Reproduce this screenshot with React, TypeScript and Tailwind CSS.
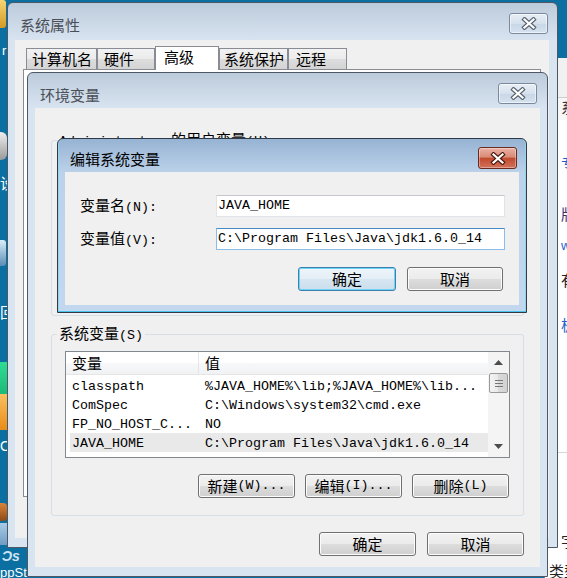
import React from "react";

const CJK = /[\u2E80-\u9FFF\uFF00-\uFFEF]/;

// split text into CJK / latin runs: CJK glyphs are wider than the mono latin ones
function T({ s }: { s: string }) {
  const runs: { cjk: boolean; text: string }[] = [];
  for (const ch of s) {
    const cjk = CJK.test(ch);
    const last = runs[runs.length - 1];
    if (last && last.cjk === cjk) last.text += ch;
    else runs.push({ cjk, text: ch });
  }
  return (
    <>
      {runs.map((r, i) =>
        r.cjk ? (
          <span key={i} className="font-['Noto_Sans_CJK_SC',sans-serif] text-[15px]">
            {r.text}
          </span>
        ) : (
          <span key={i} className="font-['Liberation_Mono',monospace] text-[13.33px]">
            {r.text}
          </span>
        )
      )}
    </>
  );
}

function CloseBtn({ active }: { active?: boolean }) {
  return (
    <div
      className={
        active
          ? "flex h-[22px] w-[39px] items-center justify-center rounded-[3px] border border-[#6a2a1e] bg-[linear-gradient(#eab3a5,#d98a74_45%,#c14a2f_52%,#d2735a)] shadow-[inset_0_0_0_1px_rgba(255,255,255,0.35)]"
          : "flex h-[21px] w-[39px] items-center justify-center rounded-[3px] border border-[#7a8a9e] bg-[linear-gradient(#e8eef6,#d6e1ed_50%,#c8d6e6_52%,#d6e2ef)] shadow-[inset_0_0_0_1px_rgba(255,255,255,0.55)]"
      }
    >
      <svg width="16" height="13" viewBox="0 0 16 13">
        <path d="M3.5 2.5 L12.5 10.5 M12.5 2.5 L3.5 10.5" stroke={active ? "#4e1a10" : "#58636f"} strokeWidth="4.4" strokeLinecap="square" />
        <path d="M3.5 2.5 L12.5 10.5 M12.5 2.5 L3.5 10.5" stroke="#ffffff" strokeWidth="2.2" strokeLinecap="square" />
      </svg>
    </div>
  );
}

function Btn({ label, w, def }: { label: string; w: string; def?: boolean }) {
  return (
    <div
      className={`flex h-[24px] ${w} items-center justify-center whitespace-pre rounded-[3px] border leading-[18px] text-black ${
        def
          ? "border-[#3c7fb1] bg-[linear-gradient(#eef5fa,#e4eef6_50%,#d6e6f1_50%,#cbdeec)] shadow-[inset_0_0_0_1px_#6fd3f6]"
          : "border-[#707070] bg-[linear-gradient(#f2f2f2,#ebebeb_50%,#dddddd_50%,#cfcfcf)] shadow-[inset_0_0_0_1px_#fcfcfc]"
      }`}
    >
      <T s={label} />
    </div>
  );
}

function Field({ value, focus }: { value: string; focus?: boolean }) {
  return (
    <div
      className={`flex h-[22px] w-[289px] items-center whitespace-pre border bg-white pl-[1px] leading-[18px] text-black ${
        focus ? "border-[#8cbde8] border-t-[#4a8bc6]" : "border-[#e0e3e8] border-t-[#c5c8ce]"
      }`}
    >
      <T s={value} />
    </div>
  );
}

const TABS = [
  { name: "计算机名", w: "w-[71px]", pl: "pl-[5px]" },
  { name: "硬件", w: "w-[58px]", pl: "pl-[6px]" },
  { name: "高级", w: "w-[64px]", pl: "pl-[8px]", active: true },
  { name: "系统保护", w: "w-[69px]", pl: "pl-[4px]" },
  { name: "远程", w: "w-[59px]", pl: "pl-[7px]" },
];

const ROWS = [
  ["classpath", "%JAVA_HOME%\\lib;%JAVA_HOME%\\lib..."],
  ["ComSpec", "C:\\Windows\\system32\\cmd.exe"],
  ["FP_NO_HOST_C...", "NO"],
  ["JAVA_HOME", "C:\\Program Files\\Java\\jdk1.6.0_14"],
];

function Arrow({ up }: { up?: boolean }) {
  return (
    <svg width="9" height="5" viewBox="0 0 9 5">
      <polygon points={up ? "0,5 4.5,0 9,5" : "0,0 4.5,5 9,0"} fill="#4d4d4d" />
    </svg>
  );
}

export default function App() {
  return (
    <div className="relative h-[578px] w-[567px] overflow-hidden bg-[#0b70a1] text-black">
      {/* desktop icon fragments on the left */}
      <div className="absolute left-0 top-0 h-[28px] w-[6px] rounded-r-[3px] bg-[linear-gradient(#f6d572,#d59a26)]" />
      <div className="absolute left-[2px] top-[44px] font-['Liberation_Sans'] text-[13px] leading-[14px] text-white">r</div>
      <div className="absolute left-0 top-[132px] h-[28px] w-[7px] rounded-r-[6px] bg-[linear-gradient(#eeeeee,#9a9a9a)]" />
      <div className="absolute left-0 top-[174px] whitespace-nowrap font-['Noto_Sans_CJK_SC'] text-[15px] leading-[18px] text-white">设置</div>
      <div className="absolute left-0 top-[240px] h-[26px] w-[6px] rounded-r-[3px] bg-[linear-gradient(#d9edf8,#5a8db6)]" />
      <div className="absolute left-0 top-[303px] font-['Noto_Sans_CJK_SC'] text-[15px] leading-[18px] text-white">回</div>
      <div className="absolute left-0 top-[362px] h-[32px] w-[7px] bg-[linear-gradient(#30dc93,#1cb978)]" />
      <div className="absolute left-0 top-[394px] h-[36px] w-[7px] bg-[linear-gradient(#f9c060,#e88d18)]" />
      <div className="absolute left-0 top-[438px] font-['Liberation_Sans'] text-[14px] leading-[16px] text-white">O</div>
      <div className="absolute left-0 top-[503px] h-[18px] w-[7px] rounded-r-[4px] bg-[linear-gradient(#d9853a,#8d4a17)]" />
      <div className="absolute left-0 top-[523px] h-[22px] w-[7px] bg-[linear-gradient(#a9cbe6,#6f9cc4)]" />
      <div className="absolute left-[2px] top-[548px] font-['Liberation_Sans'] text-[14px] font-bold italic leading-[16px] text-[#cfe3f2]">Ɔs</div>
      <div className="absolute left-0 top-[566px] whitespace-nowrap font-['Liberation_Sans'] text-[13px] leading-[14px] text-white">ppStream</div>

      {/* page behind, on the right */}
      <div className="absolute left-[544px] top-[58px] flex h-[530px] w-[40px] flex-col whitespace-nowrap border-l border-[#7f7f7f] bg-white font-['Noto_Sans_CJK_SC'] text-[15px] leading-[18px]">
        <div className="h-[40px] shrink-0 border-b border-[#cfcfcf] bg-[#f1f1f1]" />
        <div className="h-[22px] shrink-0 bg-[#f7f7f7] pl-[16px] text-[#333]">系统</div>
        <div className="mt-[34px] pl-[16px] text-[#1a5fd0]">专</div>
        <div className="mt-[33px] pl-[16px] text-[#3b2f70]">版</div>
        <div className="mt-[16px] pl-[16px] font-['Liberation_Sans'] text-[13px] leading-[14px] text-[#1a5fd0]">w</div>
        <div className="mt-[18px] pl-[16px] text-[#222]">有</div>
        <div className="mt-[27px] pl-[16px] text-[#1a5fd0]">板</div>
        <div className="mt-[118px] border-t border-[#d6d6d6]" />
        <div className="mt-[79px] pl-[16px] text-[#222]">字</div>
        <div className="mt-[12px] pl-[4px] text-[#222]">类型</div>
      </div>

      {/* 系统属性 */}
      <div className="absolute left-[7px] top-[2px] flex h-[546px] w-[551px] flex-col rounded-t-[6px] border border-[#4e5864] bg-[linear-gradient(#bccbdb,#d9e4f1_38px,#d9e4f1)]">
        <div className="flex h-[37px] shrink-0 items-start justify-between pl-[12px] pr-[9px]">
          <div className="mt-[12px] font-['Noto_Sans_CJK_SC'] text-[15px] leading-[20px] text-[#4a4f57]">系统属性</div>
          <div className="mt-[10px]">
            <CloseBtn />
          </div>
        </div>
        <div className="mb-[9px] ml-[7px] mr-[8px] flex flex-1 flex-col bg-[#f0f0f0]">
          <div className="flex h-[29px] items-end pl-[11px]">
            {TABS.map((t) =>
              t.active ? (
                <div
                  key={t.name}
                  className={`relative z-10 -mb-[1px] flex h-[24px] ${t.w} ${t.pl} items-start border border-b-0 border-[#898c95] bg-white pt-[1px] leading-[18px]`}
                >
                  <T s={t.name} />
                </div>
              ) : (
                <div
                  key={t.name}
                  className={`flex h-[21px] ${t.w} ${t.pl} items-center border border-b-0 border-[#898c95] bg-[linear-gradient(#f2f2f2,#ebebeb_50%,#dddddd_50%,#d4d4d4)] leading-[18px]`}
                >
                  <T s={t.name} />
                </div>
              )
            )}
          </div>
          <div className="mx-[8px] h-[428px] border border-[#898c95] bg-white" />
        </div>
      </div>

      {/* 环境变量 */}
      <div className="absolute left-[27px] top-[72px] flex h-[505px] w-[521px] flex-col rounded-t-[6px] border border-[#4e5864] bg-[linear-gradient(#bccbdb,#d9e4f1_36px,#d9e4f1)]">
        <div className="flex h-[35px] shrink-0 items-start justify-between pl-[12px] pr-[10px]">
          <div className="mt-[12px] font-['Noto_Sans_CJK_SC'] text-[15px] leading-[20px] text-[#4a4f57]">环境变量</div>
          <div className="mt-[10px]">
            <CloseBtn />
          </div>
        </div>
        <div className="mb-[9px] ml-[7px] mr-[7px] flex flex-1 flex-col bg-[#f0f0f0] px-[16px] pt-[22px]">
          <fieldset className="h-[186px] rounded-[3px] border border-[#d5dfe5] px-[13px]">
            <legend className="-ml-[8px] whitespace-pre px-[2px] leading-[18px]">
              <T s="Administrator 的用户变量(U)" />
            </legend>
          </fieldset>

          <fieldset className="mt-[8px] h-[192px] rounded-[3px] border border-[#d5dfe5] px-[13px]">
            <legend className="-ml-[8px] px-[2px] leading-[18px]">
              <T s="系统变量(S)" />
            </legend>
            <div className="mt-[6px] flex h-[107px] border border-[#828790] bg-white leading-[18px]">
              <div className="flex flex-1 flex-col">
                <div className="flex h-[23px] shrink-0 border-b border-[#e5e5e5] bg-[linear-gradient(#ffffff,#ffffff_50%,#f7f8fa_50%,#f1f2f4)]">
                  <div className="flex w-[133px] items-center border-r border-[#e5e5e5] pl-[6px]">
                    <T s="变量" />
                  </div>
                  <div className="flex items-center pl-[6px]">
                    <T s="值" />
                  </div>
                </div>
                <div className="flex flex-col pt-[1px]">
                  {ROWS.map(([k, v], i) => (
                    <div
                      key={k}
                      className={`flex h-[19px] items-center whitespace-pre ${
                        i === 3 ? "ml-[4px] bg-[#e9e9e9] pl-[2px]" : "pl-[6px]"
                      }`}
                    >
                      <div className="w-[133px]">
                        <T s={k} />
                      </div>
                      <div>
                        <T s={v} />
                      </div>
                    </div>
                  ))}
                </div>
              </div>
              <div className="flex w-[21px] flex-col bg-[#f4f4f4]">
                <div className="flex h-[21px] shrink-0 items-center justify-center">
                  <Arrow up />
                </div>
                <div className="mx-[1px] flex h-[20px] flex-col items-center justify-center gap-[2px] rounded-[2px] border border-[#999] bg-[linear-gradient(to_right,#f4f4f4,#e8e8e8_50%,#dadada_50%,#d2d2d2)]">
                  <div className="h-px w-[8px] bg-[#777]" />
                  <div className="h-px w-[8px] bg-[#777]" />
                  <div className="h-px w-[8px] bg-[#777]" />
                </div>
                <div className="flex-1" />
                <div className="flex h-[21px] shrink-0 items-center justify-center">
                  <Arrow />
                </div>
              </div>
            </div>
            <div className="mt-[16px] flex justify-end gap-[10px] pr-[1px]">
              <Btn label="新建(W)..." w="w-[97px]" />
              <Btn label="编辑(I)..." w="w-[97px]" />
              <Btn label="删除(L)" w="w-[97px]" />
            </div>
          </fieldset>

          <div className="mt-[16px] flex justify-end gap-[11px]">
            <Btn label="确定" w="w-[97px]" />
            <Btn label="取消" w="w-[97px]" />
          </div>
        </div>
      </div>

      {/* 编辑系统变量 (active) */}
      <div className="absolute left-[57px] top-[138px] flex h-[175px] w-[470px] flex-col rounded-t-[6px] border border-[#2e3a46] bg-[linear-gradient(#97b3d3,#bcd2ea_34px,#c3d8ee)] shadow-[inset_0_-1px_0_#47c3ee,inset_1px_0_0_#8fd6f2,inset_-1px_0_0_#8fd6f2]">
        <div className="flex h-[33px] shrink-0 items-start justify-between pl-[12px] pr-[9px]">
          <div className="mt-[10px] font-['Noto_Sans_CJK_SC'] text-[15px] leading-[20px] text-black">编辑系统变量</div>
          <div className="mt-[8px]">
            <CloseBtn active />
          </div>
        </div>
        <div className="mb-[7px] ml-[7px] mr-[7px] flex flex-1 flex-col bg-[#f0f0f0] pl-[15px] pr-[14px] pt-[23px] leading-[18px]">
          <div className="flex items-center">
            <div className="w-[136px]">
              <T s="变量名(N):" />
            </div>
            <Field value="JAVA_HOME" />
          </div>
          <div className="mt-[11px] flex items-center">
            <div className="w-[136px]">
              <T s="变量值(V):" />
            </div>
            <Field value="C:\Program Files\Java\jdk1.6.0_14" focus />
          </div>
          <div className="mt-[17px] flex justify-end gap-[11px] pr-[2px]">
            <Btn label="确定" w="w-[98px]" def />
            <Btn label="取消" w="w-[96px]" />
          </div>
        </div>
      </div>
    </div>
  );
}
